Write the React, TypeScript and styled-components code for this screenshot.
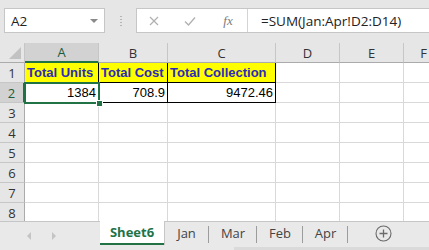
import styled, { createGlobalStyle } from "styled-components";

const GlobalStyle = createGlobalStyle`
  body {
    margin: 0;
    background: #ffffff;
    overflow: hidden;
  }
`;

const UI_FONT = `"Open Sans", "Liberation Sans", sans-serif`;
const CELL_FONT = `"Liberation Sans", Arial, sans-serif`;

const COLS = [
  { name: "A", width: 74 },
  { name: "B", width: 69 },
  { name: "C", width: 108 },
  { name: "D", width: 64 },
  { name: "E", width: 64 },
  { name: "F", width: 40 },
];

type CellData = { text: string; head?: boolean; num?: boolean };

const DATA: Record<number, CellData[]> = {
  1: [
    { text: "Total Units", head: true },
    { text: "Total Cost", head: true },
    { text: "Total Collection", head: true },
  ],
  2: [
    { text: "1384", num: true },
    { text: "708.9", num: true },
    { text: "9472.46", num: true },
  ],
};

const Window = styled.div`
  width: 429px;
  height: 250px;
  display: flex;
  flex-direction: column;
  background: #e6e6e6;
  font-family: ${UI_FONT};
  overflow: hidden;
`;

const TopBar = styled.div`
  height: 43px;
  flex: none;
  display: flex;
  align-items: flex-start;
  padding: 8px 0 0 4px;
  box-sizing: border-box;
`;

const NameBox = styled.div`
  width: 101px;
  height: 25px;
  box-sizing: border-box;
  background: #fff;
  border: 1px solid #c6c6c6;
  display: flex;
  align-items: center;
  justify-content: space-between;
  padding: 0 6px 0 6px;
  font-size: 13.5px;
  color: #222;
`;

const DropArrow = styled.span`
  width: 0;
  height: 0;
  border-left: 4px solid transparent;
  border-right: 4px solid transparent;
  border-top: 4px solid #8a8a8a;
`;

const Grip = styled.div`
  width: 31px;
  height: 25px;
  display: flex;
  align-items: center;
  justify-content: center;
`;

const GripDots = styled.span`
  width: 2px;
  height: 12px;
  background: radial-gradient(circle, #b5b5b5 0.8px, transparent 1px) 0 0 / 2px 3px;
`;

const FormulaBox = styled.div`
  flex: 1;
  height: 25px;
  display: flex;
  background: #fff;
  border: 1px solid #c6c6c6;
  border-right: none;
  box-sizing: border-box;
`;

const Controls = styled.div`
  width: 111px;
  display: flex;
  align-items: center;
  border-right: 1px solid #d4d4d4;
  box-sizing: border-box;
`;

const IconSlot = styled.span<{ $w: number }>`
  width: ${(p) => p.$w}px;
  display: flex;
  justify-content: center;
  align-items: center;
`;

const Fx = styled.span`
  font-family: "Liberation Serif", serif;
  font-style: italic;
  font-size: 13px;
  color: #7a7a7a;
`;

const FormulaText = styled.div`
  padding-left: 13px;
  display: flex;
  align-items: center;
  font-size: 13.5px;
  color: #222;
  white-space: nowrap;
`;

const Sheet = styled.div`
  flex: 1;
  background: #fff;
  overflow: hidden;
  position: relative;
`;

const Grid = styled.div`
  display: grid;
  grid-template-columns: 25px ${COLS.map((c) => `${c.width}px`).join(" ")};
  grid-auto-rows: 20px;
`;

const Corner = styled.div`
  background: #e6e6e6;
  border-right: 1px solid #c6c6c6;
  border-bottom: 1px solid #ababab;
  box-sizing: border-box;
  position: relative;
  &::after {
    content: "";
    position: absolute;
    right: 3px;
    bottom: 3px;
    width: 0;
    height: 0;
    border-left: 12px solid transparent;
    border-bottom: 12px solid #c2c2c2;
  }
`;

const ColHead = styled.div<{ $active?: boolean }>`
  background: ${(p) => (p.$active ? "#d2d2d2" : "#e6e6e6")};
  border-right: 1px solid #c6c6c6;
  border-bottom: ${(p) => (p.$active ? "2px solid #217346" : "1px solid #ababab")};
  box-sizing: border-box;
  display: flex;
  align-items: center;
  justify-content: center;
  font-size: 13px;
  color: ${(p) => (p.$active ? "#1e5b38" : "#333")};
`;

const RowHead = styled.div<{ $active?: boolean }>`
  background: ${(p) => (p.$active ? "#d2d2d2" : "#e6e6e6")};
  border-right: ${(p) => (p.$active ? "2px solid #217346" : "1px solid #ababab")};
  border-bottom: 1px solid #c6c6c6;
  box-sizing: border-box;
  display: flex;
  align-items: center;
  justify-content: center;
  font-size: 13px;
  color: ${(p) => (p.$active ? "#1e5b38" : "#333")};
`;

const Cell = styled.div<{ $head?: boolean; $num?: boolean; $boxed?: boolean }>`
  box-sizing: border-box;
  border-right: 1px solid ${(p) => (p.$boxed ? "#000" : "#d9d9d9")};
  border-bottom: 1px solid ${(p) => (p.$boxed ? "#000" : "#d9d9d9")};
  background: ${(p) => (p.$head ? "#ffff00" : "#fff")};
  font-family: ${CELL_FONT};
  font-size: 13px;
  font-weight: ${(p) => (p.$head ? 700 : 400)};
  color: ${(p) => (p.$head ? "#2b2bb8" : "#000")};
  display: flex;
  align-items: center;
  justify-content: ${(p) => (p.$num ? "flex-end" : "flex-start")};
  padding: 0 2px 0 2px;
  white-space: nowrap;
  overflow: hidden;
`;

const Selection = styled.div`
  position: absolute;
  left: 24px;
  top: 39px;
  width: 76px;
  height: 22px;
  border: 2px solid #217346;
  box-sizing: border-box;
  pointer-events: none;
  &::after {
    content: "";
    position: absolute;
    right: -5px;
    bottom: -5px;
    width: 5px;
    height: 5px;
    background: #217346;
    border: 1px solid #fff;
  }
`;

const TabBar = styled.div`
  height: 29px;
  flex: none;
  display: flex;
  align-items: stretch;
  border-top: 1px solid #c6c6c6;
  background: #e9e9e9;
  box-sizing: border-box;
  position: relative;
`;

const Nav = styled.div`
  width: 100px;
  display: flex;
  align-items: center;
  padding-left: 27px;
  gap: 21px;
  box-sizing: border-box;
`;

const NavArrow = styled.span<{ $dir: "left" | "right" }>`
  width: 0;
  height: 0;
  border-top: 4px solid transparent;
  border-bottom: 4px solid transparent;
  ${(p) =>
    p.$dir === "left"
      ? "border-right: 4px solid #c4c4c4;"
      : "border-left: 4px solid #c4c4c4;"}
`;

const Tab = styled.div<{ $active?: boolean; $w: number }>`
  width: ${(p) => p.$w}px;
  margin-top: -1px;
  display: flex;
  align-items: center;
  justify-content: center;
  box-sizing: border-box;
  font-size: 13px;
  position: relative;
  ${(p) =>
    p.$active
      ? `background: #fff;
         color: #217346;
         font-weight: 700;
         border-bottom: 2px solid #217346;
         margin-bottom: 5px;
         box-shadow: 1px 0 0 #c6c6c6;`
      : `color: #444;
         margin-bottom: 5px;
         &::after {
           content: "";
           position: absolute;
           right: 0;
           top: 5px;
           bottom: 2px;
           width: 1px;
           background: #9c9c9c;
         }`}
`;

const AddSheet = styled.div`
  width: 70px;
  display: flex;
  align-items: center;
  justify-content: center;
  padding-bottom: 5px;
`;

const Scroll = styled.div`
  position: absolute;
  left: 234px;
  right: 0;
  bottom: 0;
  height: 3px;
  background: #dadada;
`;

const TABS = [
  { name: "Sheet6", w: 64, active: true },
  { name: "Jan", w: 45 },
  { name: "Mar", w: 48 },
  { name: "Feb", w: 46 },
  { name: "Apr", w: 45 },
];

export default function App() {
  const rows = [1, 2, 3, 4, 5, 6, 7, 8];
  return (
    <>
      <GlobalStyle />
      <Window>
        <TopBar>
          <NameBox>
            A2
            <DropArrow />
          </NameBox>
          <Grip>
            <GripDots />
          </Grip>
          <FormulaBox>
            <Controls>
              <IconSlot $w={34}>
                <svg width="10" height="10" viewBox="0 0 10 10">
                  <path d="M1 1 L9 9 M9 1 L1 9" stroke="#b0b0b0" strokeWidth="1.2" />
                </svg>
              </IconSlot>
              <IconSlot $w={38}>
                <svg width="12" height="10" viewBox="0 0 12 10">
                  <path d="M1 5.5 L4.5 9 L11 1.5" stroke="#b0b0b0" strokeWidth="1.3" fill="none" />
                </svg>
              </IconSlot>
              <IconSlot $w={38}>
                <Fx>fx</Fx>
              </IconSlot>
            </Controls>
            <FormulaText>=SUM(Jan:Apr!D2:D14)</FormulaText>
          </FormulaBox>
        </TopBar>
        <Sheet>
          <Grid>
            <Corner />
            {COLS.map((c) => (
              <ColHead key={c.name} $active={c.name === "A"}>
                {c.name}
              </ColHead>
            ))}
            {rows.map((r) => [
              <RowHead key={`h${r}`} $active={r === 2}>
                {r}
              </RowHead>,
              ...COLS.map((c, i) => {
                const d = DATA[r]?.[i];
                return (
                  <Cell
                    key={`${r}${c.name}`}
                    $head={d?.head}
                    $num={d?.num}
                    $boxed={!!d}
                  >
                    {d?.text}
                  </Cell>
                );
              }),
            ])}
          </Grid>
          <Selection />
        </Sheet>
        <TabBar>
          <Nav>
            <NavArrow $dir="left" />
            <NavArrow $dir="right" />
          </Nav>
          {TABS.map((t) => (
            <Tab key={t.name} $active={t.active} $w={t.w}>
              {t.name}
            </Tab>
          ))}
          <AddSheet>
            <svg width="17" height="17" viewBox="0 0 17 17">
              <circle cx="8.5" cy="8.5" r="7.5" stroke="#6a6a6a" strokeWidth="1.1" fill="none" />
              <path d="M8.5 4.5 V12.5 M4.5 8.5 H12.5" stroke="#6a6a6a" strokeWidth="1.3" />
            </svg>
          </AddSheet>
          <Scroll />
        </TabBar>
      </Window>
    </>
  );
}
